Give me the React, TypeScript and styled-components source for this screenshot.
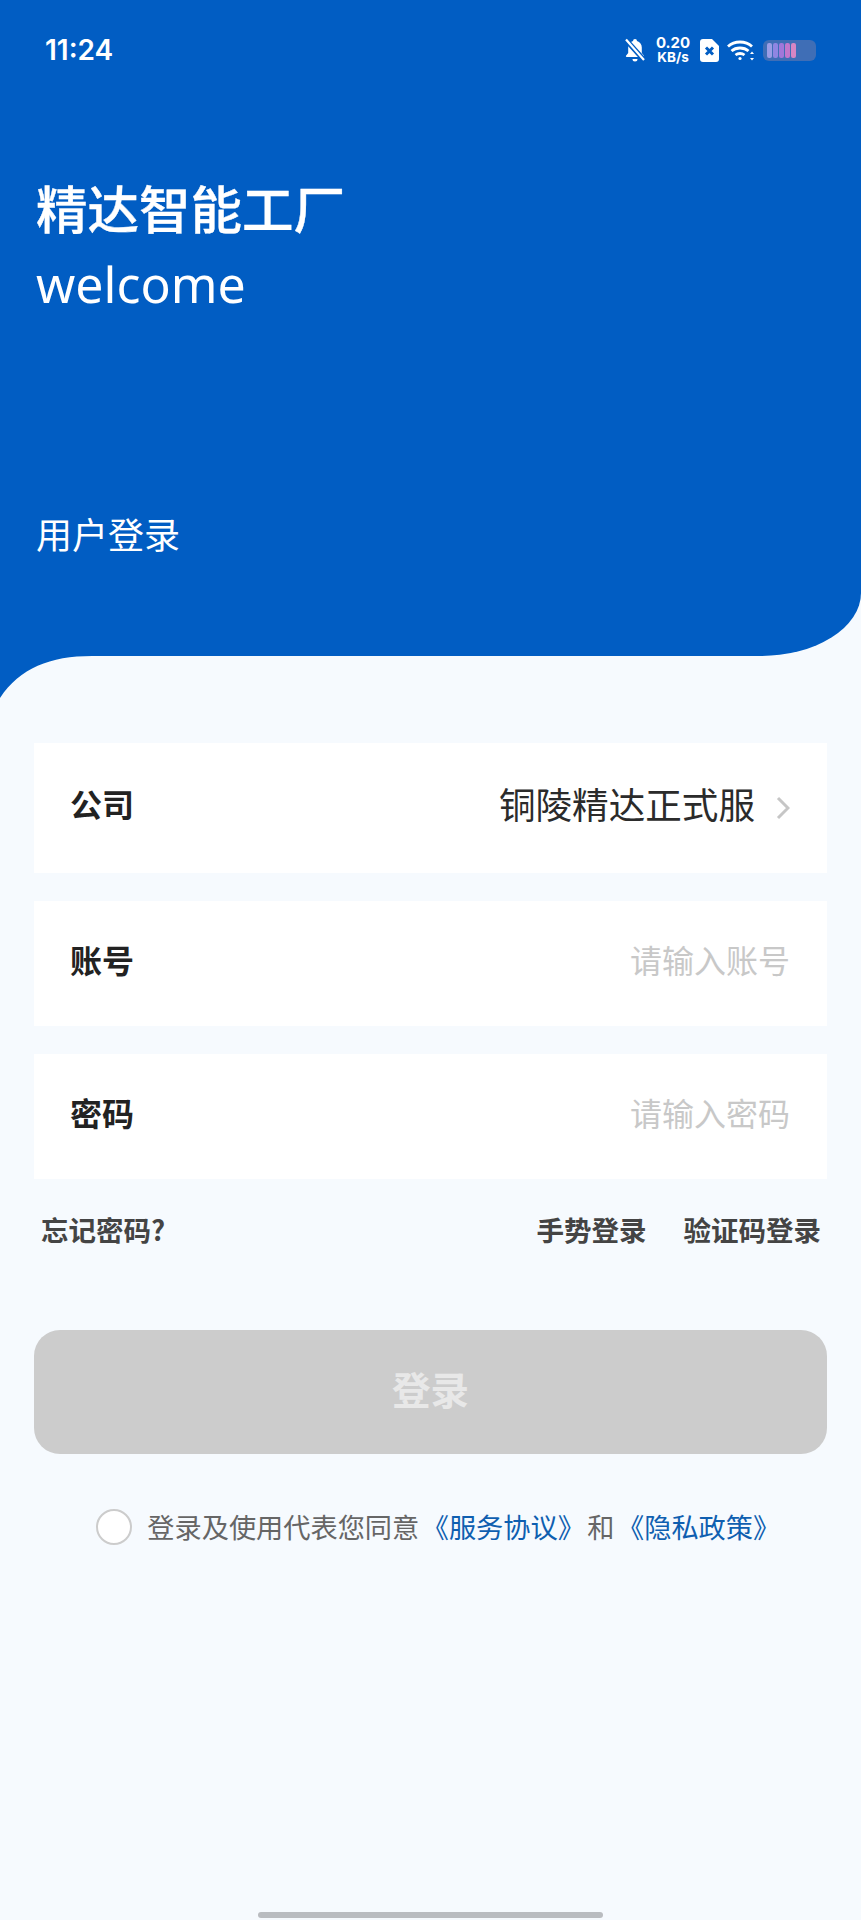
import { createGlobalStyle, styled } from "styled-components";

const BLUE = "#015dc3";
const BG = "#f6fafe";
const CJK = `"Noto Sans CJK SC", "Noto Sans", sans-serif`;

const Global = createGlobalStyle`
  html, body { margin: 0; padding: 0; background: ${BG}; }
  body { font-family: ${CJK}; overflow: hidden; text-spacing-trim: space-all; }
  * { box-sizing: border-box; }
`;

const Page = styled.div`
  width: 861px;
  height: 1920px;
  display: flex;
  flex-direction: column;
  background: ${BG};
`;

const Header = styled.header`
  position: relative;
  height: 656px;
  flex: none;
  display: flex;
  flex-direction: column;
  color: #fff;
  background: ${BLUE};
  border-bottom-right-radius: 101px 63px;

  &::after {
    content: "";
    position: absolute;
    left: 0;
    top: 100%;
    width: 92px;
    height: 42px;
    background: ${BLUE};
    clip-path: path("M0 0H92C50 0 20 12 0 42Z");
  }
`;

const StatusBar = styled.div`
  height: 100px;
  flex: none;
  padding: 0 45px;
  display: flex;
  align-items: center;
  justify-content: space-between;
`;

const Time = styled.span`
  font-family: Inter, sans-serif;
  font-size: 28px;
  font-weight: 600;
  line-height: 1;
`;

const StatusIcons = styled.div`
  display: flex;
  align-items: center;
`;

const Speed = styled.div`
  display: flex;
  flex-direction: column;
  align-items: center;
  width: 36px;
  margin: 0 9px 0 10px;
  font-family: Inter, sans-serif;
  font-weight: 700;
  line-height: 1;
`;

const SpeedValue = styled.span`
  font-size: 15px;
`;

const SpeedUnit = styled.span`
  font-size: 13.5px;
  margin-top: 1px;
`;

const Battery = styled.div`
  width: 53px;
  height: 21px;
  margin-left: 8px;
  padding: 3px 4px;
  display: flex;
  gap: 1px;
  border-radius: 6px;
  background: #3f6eb6;
`;

const BatteryCell = styled.i<{ $color: string }>`
  display: block;
  width: 5px;
  border-radius: 2px;
  background: ${(p) => p.$color};
`;

const Intro = styled.div`
  padding: 72px 36px 0;
  display: flex;
  flex-direction: column;
`;

const Title = styled.h1`
  margin: 0;
  font-size: 51.5px;
  font-weight: 500;
  line-height: 70px;
  -webkit-text-stroke: 0.4px #fff;
`;

const Welcome = styled.div`
  margin-top: 4px;
  font-family: "Noto Sans", sans-serif;
  font-size: 50px;
  font-weight: 400;
  line-height: 76px;
`;

const Subtitle = styled.div`
  margin-top: 186px;
  font-size: 36px;
  line-height: 50px;
`;

const Form = styled.main`
  flex: 1;
  padding: 87px 34px 0;
  display: flex;
  flex-direction: column;
  gap: 28px;
`;

const Row = styled.div<{ $height: number }>`
  height: ${(p) => p.$height}px;
  padding: 0 37px 0 36px;
  display: flex;
  align-items: center;
  justify-content: space-between;
  background: #fff;
`;

const Label = styled.span`
  margin-bottom: 10px;
  font-size: 32px;
  font-weight: 700;
  color: #222;
`;

const Value = styled.span`
  display: flex;
  align-items: center;
  gap: 21px;
  font-size: 36.6px;
  color: #2b2b2b;
`;

const ValueText = styled.span`
  margin-bottom: 10px;
`;

const Placeholder = styled.span`
  margin-bottom: 10px;
  font-size: 32px;
  color: #c8c8c8;
`;

const Links = styled.div`
  margin-top: -6px;
  height: 56px;
  padding: 0 6px 0 7px;
  display: flex;
  align-items: center;
  justify-content: space-between;
`;

const LinkGroup = styled.div`
  display: flex;
  gap: 37px;
`;

const TextLink = styled.span`
  font-size: 27.5px;
  font-weight: 700;
  color: #444;
`;

const Submit = styled.button`
  margin-top: 45px;
  height: 124px;
  flex: none;
  padding: 0 0 9px;
  border: none;
  border-radius: 26px;
  font-family: inherit;
  font-size: 38.5px;
  font-weight: 700;
  color: #e8e8e8;
  background: #cccccc;
`;

const Agreement = styled.div`
  margin-top: 25px;
  height: 40px;
  padding-left: 18px;
  display: flex;
  align-items: center;
  justify-content: center;
  font-size: 27.2px;
  color: #666;
`;

const AgreementText = styled.span`
  margin-bottom: 3px;
`;

const Radio = styled.span`
  width: 36px;
  height: 36px;
  margin-right: 15px;
  flex: none;
  border: 2.5px solid #ccc;
  border-radius: 50%;
  background: #fff;
`;

const Policy = styled.span`
  margin: 0 2.5px;
  color: #0f5fb0;
`;

const HomeBar = styled.div`
  width: 345px;
  height: 6px;
  flex: none;
  margin: 0 auto 2px;
  border-radius: 3px;
  background: #b9bcc0;
`;

const cells = ["#9a9de6", "#8f86e2", "#a177da", "#c277cc", "#d586c4"];

const App = () => (
  <Page>
    <Global />
    <Header>
      <StatusBar>
        <Time>11:24</Time>
        <StatusIcons>
          <svg width="20" height="24" viewBox="0 0 20 24" fill="#fff">
            <path d="M10 1a2 2 0 0 1 2 2c3 .8 4.800 3.400 4.800 6.500v5.500l2.200 2.800c.3.5 0 1.200-.6 1.200H1.600c-.6 0-.9-.7-.6-1.200l2.200-2.800V9.500C3.200 6.400 5 3.800 8 3a2 2 0 0 1 2-2zM7.500 21h5a2.500 2.500 0 0 1-5 0z" />
            <path d="M1 2l18 20" stroke={BLUE} strokeWidth="5" />
            <path d="M1 1.500l18 20.500" stroke="#fff" strokeWidth="2.200" />
          </svg>
          <Speed>
            <SpeedValue>0.20</SpeedValue>
            <SpeedUnit>KB/s</SpeedUnit>
          </Speed>
          <svg width="19" height="23" viewBox="0 0 19 23">
            <path
              d="M3 0h9l7 7v13a3 3 0 0 1-3 3H3a3 3 0 0 1-3-3V3a3 3 0 0 1 3-3z"
              fill="#fff"
            />
            <path d="M6 8.500l7 7M13 8.500l-7 7" stroke={BLUE} strokeWidth="3" />
          </svg>
          <svg
            width="28"
            height="21"
            viewBox="0 0 28 21"
            fill="none"
            stroke="#fff"
            strokeWidth="2.800"
            style={{ marginLeft: 8 }}
          >
            <path d="M1 6.500c6.500-6 17.500-6 24 0" />
            <path d="M4.500 11c4.500-4 12.500-4 17 0" />
            <path d="M8.500 15c2.500-2 6.500-2 9 0" />
            <circle cx="13" cy="18.500" r="1.600" fill="#fff" stroke="none" />
            <path d="M25 11.500l2 2.500h-4zM25 20.500l2-2.500h-4z" fill="#fff" stroke="none" />
          </svg>
          <Battery>
            {cells.map((color) => (
              <BatteryCell key={color} $color={color} />
            ))}
          </Battery>
        </StatusIcons>
      </StatusBar>
      <Intro>
        <Title>精达智能工厂</Title>
        <Welcome>welcome</Welcome>
        <Subtitle>用户登录</Subtitle>
      </Intro>
    </Header>
    <Form>
      <Row $height={130}>
        <Label>公司</Label>
        <Value>
          <ValueText>铜陵精达正式服</ValueText>
          <svg width="14" height="24" viewBox="0 0 14 24" fill="none" stroke="#c6c6c6" strokeWidth="3">
            <path d="M2 2l10 10-10 10" />
          </svg>
        </Value>
      </Row>
      <Row $height={125}>
        <Label>账号</Label>
        <Placeholder>请输入账号</Placeholder>
      </Row>
      <Row $height={125}>
        <Label>密码</Label>
        <Placeholder>请输入密码</Placeholder>
      </Row>
      <Links>
        <TextLink>忘记密码?</TextLink>
        <LinkGroup>
          <TextLink>手势登录</TextLink>
          <TextLink>验证码登录</TextLink>
        </LinkGroup>
      </Links>
      <Submit>登录</Submit>
      <Agreement>
        <Radio />
        <AgreementText>
          登录及使用代表您同意<Policy>《服务协议》</Policy>和<Policy>《隐私政策》</Policy>
        </AgreementText>
      </Agreement>
    </Form>
    <HomeBar />
  </Page>
);

export default App;
